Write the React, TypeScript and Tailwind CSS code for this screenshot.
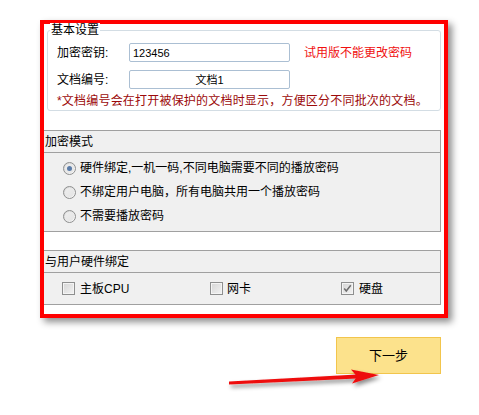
import React from "react";

const font = { fontFamily: '"Liberation Sans", "Noto Sans CJK SC", sans-serif' };

function Radio({ checked }: { checked?: boolean }) {
  return (
    <div className="w-[13px] h-[13px] rounded-full border border-[#8e8f8f] bg-gradient-to-br from-[#d4d4d4] to-[#fcfcfc] flex items-center justify-center shrink-0">
      <div className="w-[9px] h-[9px] rounded-full bg-gradient-to-br from-[#eeeeee] to-[#e4e4e4] flex items-center justify-center">
        {checked && <div className="w-[5px] h-[5px] rounded-full bg-[#5b7ca8]" />}
      </div>
    </div>
  );
}

function Check({ checked }: { checked?: boolean }) {
  return (
    <div className="w-[13px] h-[13px] border border-[#8e8f8f] bg-[#f4f4f4] flex items-center justify-center shrink-0">
      <div className="w-[9px] h-[9px] bg-gradient-to-br from-[#d8d8d8] to-[#f0f0f0] flex items-center justify-center">
        {checked && (
          <svg width="11" height="11" viewBox="0 0 11 11" className="-mt-[1px]">
            <path d="M1.5 5.5 L4 8.5 L9.5 1.5" stroke="#6d6d6d" strokeWidth="1.8" fill="none" />
          </svg>
        )}
      </div>
    </div>
  );
}

export default function App() {
  return (
    <div className="relative w-[479px] h-[415px] bg-white pt-[20px] pl-[40px] text-[12px] text-black" style={font}>
      <div className="w-[408px] h-[298px] border-4 border-[#ff0000] bg-white shadow-[4px_4px_7px_rgba(0,0,0,0.45)] flex flex-col">
        {/* 基本设置 */}
        <div className="relative mt-[6px] mx-[3px] h-[81px] border border-[#d3dde4] rounded-[3px] pt-[12px] pl-[9px]">
          <span className="absolute left-[2px] -top-[8px] px-[1px] bg-white leading-[14px] text-[12px]">基本设置</span>
          <div className="flex items-center h-[19px]">
            <span className="w-[72px] leading-[14px]">加密密钥:</span>
            <div className="w-[161px] h-[19px] border border-[#abbfd3] rounded-[2px] bg-white flex items-center pl-[3px] text-[11px] leading-[12px]">123456</div>
            <span className="ml-[14px] text-[#f01010] leading-[14px]">试用版不能更改密码</span>
          </div>
          <div className="flex items-center h-[19px] mt-[8px]">
            <span className="w-[72px] leading-[14px]">文档编号:</span>
            <div className="w-[161px] h-[19px] border border-[#abbfd3] rounded-[2px] bg-white flex items-center justify-center text-[11px] leading-[12px]">文档1</div>
          </div>
          <div className="mt-[5px] leading-[14px] text-[#9c0a0a] whitespace-nowrap tracking-[0.2px]">*文档编号会在打开被保护的文档时显示，方便区分不同批次的文档。</div>
        </div>

        {/* 加密模式 */}
        <div className="mt-[19px] mr-[3px] h-[102px] border border-l-0 border-[#a0a0a0] bg-[#f0f0f0] flex flex-col">
          <div className="h-[22px] border-b border-[#a0a0a0] flex items-center pl-[1px] leading-[14px]">加密模式</div>
          <div className="pt-[3px] pl-[19px]">
            <div className="h-[24px] flex items-center gap-[4px]">
              <Radio checked />
              <span className="leading-[14px]">硬件绑定,一机一码,不同电脑需要不同的播放密码</span>
            </div>
            <div className="h-[24px] flex items-center gap-[4px]">
              <Radio />
              <span className="leading-[14px]">不绑定用户电脑，所有电脑共用一个播放密码</span>
            </div>
            <div className="h-[24px] flex items-center gap-[4px]">
              <Radio />
              <span className="leading-[14px]">不需要播放密码</span>
            </div>
          </div>
        </div>

        {/* 与用户硬件绑定 */}
        <div className="mt-[18px] mr-[3px] h-[55px] border border-l-0 border-[#a0a0a0] bg-[#f0f0f0] flex flex-col">
          <div className="h-[22px] border-b border-[#a0a0a0] flex items-center pl-[1px] leading-[14px]">与用户硬件绑定</div>
          <div className="flex-1 flex items-center pl-[18px]">
            <div className="w-[148px] flex items-center gap-[5px]">
              <Check />
              <span className="leading-[14px]">主板CPU</span>
            </div>
            <div className="w-[131px] flex items-center gap-[4px]">
              <Check />
              <span className="leading-[14px]">网卡</span>
            </div>
            <div className="flex items-center gap-[5px]">
              <Check checked />
              <span className="leading-[14px]">硬盘</span>
            </div>
          </div>
        </div>
      </div>

      <button className="mt-[19px] ml-[296px] w-[105px] h-[37px] bg-[#fce28c] border border-[#f2c54c] flex items-center justify-center text-[13px] leading-[14px] text-black">
        下一步
      </button>

      <svg className="absolute left-0 top-0 pointer-events-none" width="479" height="415" viewBox="0 0 479 415">
        <defs>
          <filter id="sh" x="-10%" y="-50%" width="130%" height="250%">
            <feDropShadow dx="2" dy="3" stdDeviation="2" floodColor="#000" floodOpacity="0.45" />
          </filter>
        </defs>
        <g filter="url(#sh)">
          <path d="M229 381.5 L357 374.5 L357 378.5 L229 384.5 Z" fill="#ee1111" />
          <path d="M351 369.5 L379 375 L352 383.5 L357 376.5 Z" fill="#ee1111" />
        </g>
      </svg>
    </div>
  );
}
